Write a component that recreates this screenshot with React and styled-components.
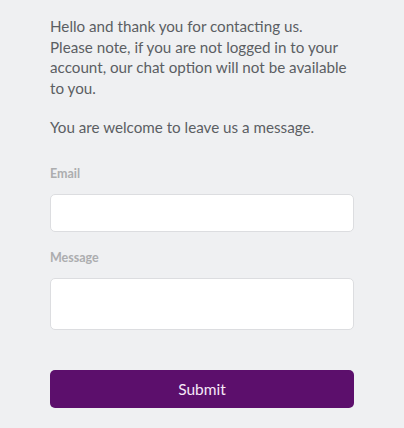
import React from 'react'
import styled, { createGlobalStyle } from 'styled-components'

const GlobalStyle = createGlobalStyle`
  html, body {
    margin: 0;
    padding: 0;
    background: #eff0f2;
  }
  body {
    font-family: Lato, "Open Sans", sans-serif;
  }
`;

const Page = styled.div`
  width: 304px;
  padding: 16px 50px 20px;
`;

const Intro = styled.p`
  margin: 0 0 18.5px;
  font-size: 15.2px;
  line-height: 20.5px;
  color: #5b5e63;
`;

const Form = styled.form`
  display: flex;
  flex-direction: column;
  padding-top: 10px;
`;

const Label = styled.label`
  font-size: 12.5px;
  font-weight: 700;
  color: #acadaf;
  line-height: 16px;
  margin-bottom: 12px;
`;

const Field = styled.input`
  box-sizing: border-box;
  width: 304px;
  height: ${p => p.$tall ? 52 : 38}px;
  background: #fff;
  border: 1px solid #dcdde0;
  border-radius: 5px;
  margin: 0 0 ${p => p.$tall ? 40 : 18}px;
  padding: 0 10px;
  font-family: inherit;
  font-size: 15px;
  outline: none;
`;

const Button = styled.button`
  width: 304px;
  height: 38px;
  border: none;
  border-radius: 5px;
  background: #5c0f6c;
  color: #f6e8f8;
  font-family: inherit;
  font-size: 15.5px;
  cursor: pointer;
`;

export default function App() {
  return (
    <Page>
      <GlobalStyle />
      <Intro>
        Hello and thank you for contacting us.<br />
        Please note, if you are not logged in to your account, our chat option will not be available to you.
      </Intro>
      <Intro>You are welcome to leave us a message.</Intro>
      <Form onSubmit={e => e.preventDefault()}>
        <Label>Email</Label>
        <Field type="email" />
        <Label>Message</Label>
        <Field $tall />
        <Button type="submit">Submit</Button>
      </Form>
    </Page>
  )
}
